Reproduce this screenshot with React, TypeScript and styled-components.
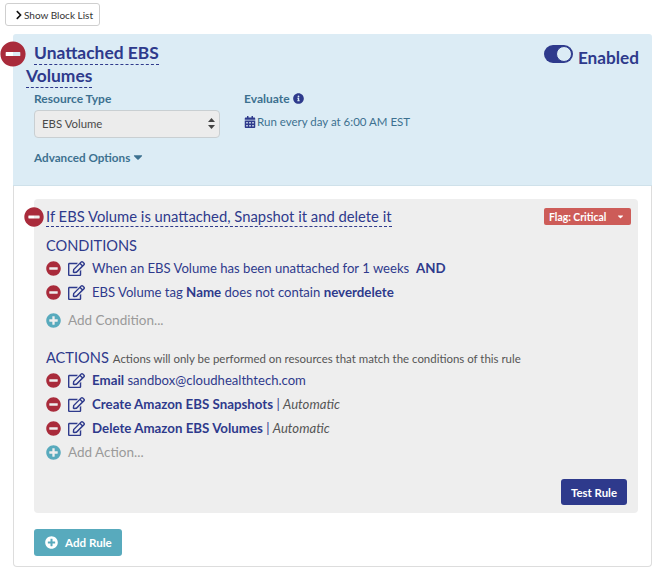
import React, { FC } from "react";
import styled, { createGlobalStyle } from "styled-components";
import { FaCalendarAlt, FaCaretDown, FaChevronRight, FaInfoCircle, FaMinusCircle, FaPlusCircle, FaRegEdit } from "react-icons/fa";

const navy = "#2e3a8c";
const slate = "#3d7190";
const red = "#a92b3b";
const teal = "#58aabd";

const GlobalStyle = createGlobalStyle`
    html, body {
        margin: 0;
        background: #ffffff;
        font-family: "Lato", "Liberation Sans", sans-serif;
    }
`

const Page = styled.div`
    width: 663px;
    height: 573px;
    box-sizing: border-box;
    padding: 3px 11px 0 13px;
    overflow: hidden;
`

const BlockListButton = styled.button`
    display: flex;
    align-items: center;
    gap: 0;
    box-sizing: border-box;
    width: 95px;
    height: 23px;
    margin: 0 0 8px -8px;
    padding: 0 0 0 8px;
    background: #ffffff;
    border: 1px solid #cfcfcf;
    border-radius: 3px;
    font: 400 10px "Lato", sans-serif;
    color: #333333;
    white-space: nowrap;
    & svg {
        flex-shrink: 0;
    }
`

const Header = styled.section`
    position: relative;
    display: flex;
    justify-content: space-between;
    box-sizing: border-box;
    width: 639px;
    height: 152px;
    background: #dcecf5;
    border-radius: 3px 3px 0 0;
    border-bottom: 1px solid #cfe1ea;
    padding: 7px 13px 0 13px;
`

const HeaderMain = styled.div`
    width: 420px;
`

const RemoveBlock = styled.span`
    position: absolute;
    left: -13px;
    top: 7px;
    display: flex;
    color: ${red};
`

const Title = styled.h1`
    width: 150px;
    margin: 0;
    text-indent: 8px;
    font-size: 17.4px;
    line-height: 23px;
    font-weight: 700;
    color: ${navy};
`

const Dashed = styled.span`
    border-bottom: 1px dashed ${navy};
    padding-bottom: 1px;
`

const Columns = styled.div`
    display: flex;
    gap: 25px;
    margin: 2px 0 0 8px;
`

const Column = styled.div`
    width: 185px;
`

const FieldLabel = styled.div`
    display: flex;
    align-items: center;
    gap: 3px;
    height: 18px;
    font-size: 12px;
    font-weight: 700;
    color: ${slate};
`

const SelectBox = styled.div`
    display: flex;
    align-items: center;
    justify-content: space-between;
    box-sizing: border-box;
    width: 186px;
    height: 28px;
    margin-top: 3px;
    padding: 0 4px 2px 7px;
    background: #ececec;
    border: 1px solid #c9cfd2;
    border-radius: 4px;
    font-size: 11.4px;
    color: #4a4a4a;
`

const Schedule = styled.div`
    display: flex;
    align-items: center;
    gap: 1px;
    margin-top: 8px;
    font-size: 11.5px;
    white-space: nowrap;
    color: ${slate};
    & svg {
        color: ${navy};
    }
`

const AdvancedOptions = styled.div`
    display: flex;
    align-items: center;
    gap: 1px;
    margin: 12px 0 0 8px;
    font-size: 11.7px;
    font-weight: 700;
    color: ${slate};
`

const EnabledToggle = styled.div`
    display: flex;
    align-items: center;
    gap: 5px;
    height: 26px;
    margin-top: 3px;
    font-size: 17.2px;
    font-weight: 700;
    color: ${navy};
`

const ToggleTrack = styled.span`
    position: relative;
    width: 29px;
    height: 18px;
    margin-top: -6px;
    border-radius: 9px;
    background: ${navy};
    &::after {
        content: "";
        position: absolute;
        right: 1px;
        top: 1px;
        width: 14px;
        height: 14px;
        border: 1px solid ${navy};
        border-radius: 50%;
        background: #dcecf5;
    }
`

const Card = styled.section`
    box-sizing: border-box;
    width: 639px;
    height: 381px;
    padding: 13px 13px 0 20px;
    background: #ffffff;
    border: 1px solid #dddddd;
    border-top: none;
    border-radius: 0 0 4px 4px;
`

const Rule = styled.div`
    position: relative;
    box-sizing: border-box;
    height: 314px;
    padding: 7px 7px 0 12px;
    background: #eeeeee;
    border-radius: 4px;
`

const RuleTitleRow = styled.div`
    display: flex;
    align-items: center;
    justify-content: space-between;
    height: 20px;
`

const RemoveRule = styled.span`
    position: absolute;
    left: -10px;
    top: 8px;
    display: flex;
    color: ${red};
`

const RuleTitle = styled.h2`
    margin: 0;
    font-size: 14.8px;
    font-weight: 400;
    color: ${navy};
`

const FlagButton = styled.div`
    display: flex;
    align-items: center;
    justify-content: space-between;
    box-sizing: border-box;
    width: 87px;
    height: 17px;
    margin-top: 1px;
    padding: 0 6px 0 5px;
    background: #cd5c58;
    border-radius: 2px;
    font-size: 10.4px;
    font-weight: 700;
    color: #ffffff;
`

const SectionHeading = styled.div<{ $top: number }>`
    margin-top: ${props => props.$top}px;
    height: 20px;
    line-height: 20px;
    font-size: 14.6px;
    color: ${navy};
    white-space: nowrap;
`

const SectionNote = styled.span`
    margin-left: 4px;
    font-size: 11.45px;
    color: #555555;
`

const RowList = styled.div`
    display: flex;
    flex-direction: column;
`

const Row = styled.div`
    display: flex;
    align-items: center;
    height: 24px;
    font-size: 13.1px;
    color: ${navy};
    white-space: nowrap;
    & b {
        font-size: 13.3px;
        font-weight: 700;
    }
    & > svg:first-child {
        color: ${red};
        margin-right: 7px;
    }
    & > svg:nth-child(2) {
        margin-right: 7px;
    }
`

const AutoNote = styled.span`
    color: #555555;
    font-style: italic;
`

const AddRow = styled.div<{ $top: number }>`
    display: flex;
    align-items: center;
    gap: 7px;
    height: 24px;
    margin-top: ${props => props.$top}px;
    font-size: 13.5px;
    color: #9a9a9a;
    & svg {
        color: ${teal};
    }
`

const TestRuleButton = styled.button`
    position: absolute;
    right: 11px;
    bottom: 8px;
    width: 66px;
    height: 26px;
    padding: 0;
    background: ${navy};
    border: none;
    border-radius: 3px;
    font: 700 11.4px "Lato", sans-serif;
    color: #ffffff;
`

const AddRuleButton = styled.button`
    display: flex;
    align-items: center;
    gap: 7px;
    width: 88px;
    height: 27px;
    margin-top: 16px;
    padding: 0 0 0 11px;
    background: ${teal};
    border: none;
    border-radius: 3px;
    font: 700 11.6px "Lato", sans-serif;
    color: #ffffff;
`

const SelectArrows: FC = () => (
    <svg width="7" height="11" viewBox="0 0 7 11">
        <path d="M3.5 0 7 4H0zM3.5 11 0 7h7z" fill="#444444" />
    </svg>
)

const ListRow: FC<{ children: React.ReactNode }> = ({ children }) => (
    <Row>
        <FaMinusCircle size={15} />
        <FaRegEdit size={17} />
        <span>{children}</span>
    </Row>
)

export default function App() {
    return (
        <Page>
            <GlobalStyle />
            <BlockListButton><FaChevronRight size={10} color="#111111" />Show Block List</BlockListButton>
            <Header>
                <RemoveBlock><FaMinusCircle size={26} /></RemoveBlock>
                <HeaderMain>
                    <Title><Dashed>Unattached EBS Volumes</Dashed></Title>
                    <Columns>
                        <Column>
                            <FieldLabel>Resource Type</FieldLabel>
                            <SelectBox>EBS Volume<SelectArrows /></SelectBox>
                        </Column>
                        <Column>
                            <FieldLabel>Evaluate <FaInfoCircle size={11} color={navy} /></FieldLabel>
                            <Schedule><FaCalendarAlt size={12} />Run every day at 6:00 AM EST</Schedule>
                        </Column>
                    </Columns>
                    <AdvancedOptions>Advanced Options <FaCaretDown size={14} /></AdvancedOptions>
                </HeaderMain>
                <EnabledToggle><ToggleTrack />Enabled</EnabledToggle>
            </Header>
            <Card>
                <Rule>
                    <RemoveRule><FaMinusCircle size={20} /></RemoveRule>
                    <RuleTitleRow>
                        <RuleTitle><Dashed>If EBS Volume is unattached, Snapshot it and delete it</Dashed></RuleTitle>
                        <FlagButton>Flag: Critical <FaCaretDown size={9} /></FlagButton>
                    </RuleTitleRow>
                    <SectionHeading $top={10}>CONDITIONS</SectionHeading>
                    <RowList>
                        <ListRow>When an EBS Volume has been unattached for 1 weeks&nbsp; <b>AND</b></ListRow>
                        <ListRow>EBS Volume tag <b>Name</b> does not contain <b>neverdelete</b></ListRow>
                    </RowList>
                    <AddRow $top={4}><FaPlusCircle size={15} />Add Condition...</AddRow>
                    <SectionHeading $top={16}>ACTIONS<SectionNote>Actions will only be performed on resources that match the conditions of this rule</SectionNote></SectionHeading>
                    <RowList>
                        <ListRow><b>Email</b> sandbox@cloudhealthtech.com</ListRow>
                        <ListRow><b>Create Amazon EBS Snapshots</b> | <AutoNote>Automatic</AutoNote></ListRow>
                        <ListRow><b>Delete Amazon EBS Volumes</b> | <AutoNote>Automatic</AutoNote></ListRow>
                    </RowList>
                    <AddRow $top={0}><FaPlusCircle size={15} />Add Action...</AddRow>
                    <TestRuleButton>Test Rule</TestRuleButton>
                </Rule>
                <AddRuleButton><FaPlusCircle size={13} />Add Rule</AddRuleButton>
            </Card>
        </Page>
    )
}
